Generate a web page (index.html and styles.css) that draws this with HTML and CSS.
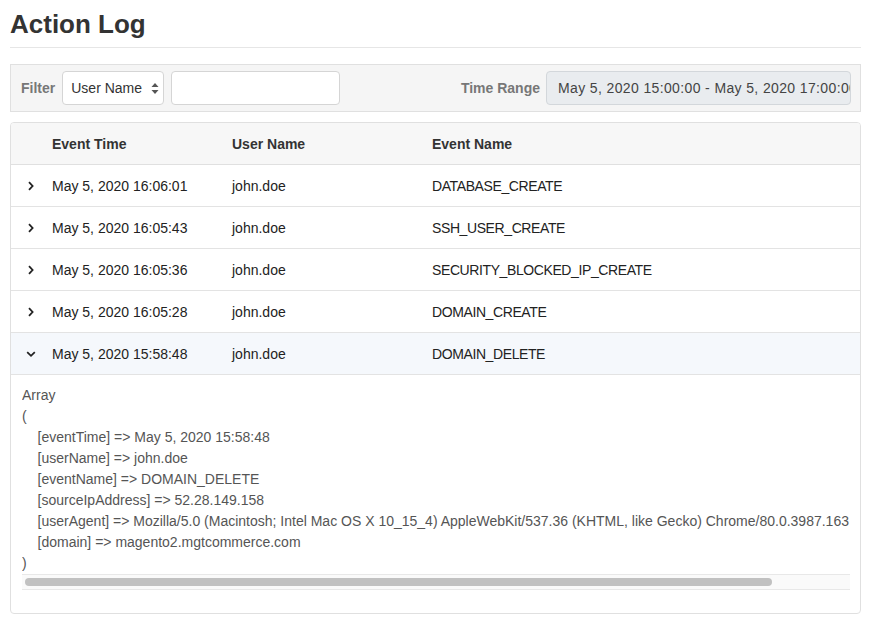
FILE: index.html
```html
<!DOCTYPE html>
<html>
<head>
<meta charset="utf-8">
<title>Action Log</title>
<link rel="stylesheet" href="styles.css">
</head>
<body>
<div class="page">
  <h1 class="title">Action Log</h1>
  <div class="filter-bar">
    <div class="filter-left">
      <span class="label">Filter</span>
      <div class="select">
        <span>User Name</span>
        <svg class="updown" width="8" height="13" viewBox="0 0 8 13"><path d="M4 1 L7.5 5 H0.5 Z M4 12 L7.5 8 H0.5 Z" fill="#555"/></svg>
      </div>
      <div class="text-input"></div>
    </div>
    <div class="filter-right">
      <span class="label">Time Range</span>
      <div class="range-input">May 5, 2020 15:00:00 - May 5, 2020 17:00:00</div>
    </div>
  </div>

  <div class="card">
    <div class="row head">
      <div></div>
      <div>Event Time</div>
      <div>User Name</div>
      <div>Event Name</div>
    </div>
    <div class="row">
      <div class="chev"><svg width="10" height="10" viewBox="0 0 10 10"><path d="M3 1.2 L6.6 5 L3 8.8" fill="none" stroke="#222" stroke-width="1.8"/></svg></div>
      <div>May 5, 2020 16:06:01</div>
      <div>john.doe</div>
      <div class="ev">DATABASE_CREATE</div>
    </div>
    <div class="row">
      <div class="chev"><svg width="10" height="10" viewBox="0 0 10 10"><path d="M3 1.2 L6.6 5 L3 8.8" fill="none" stroke="#222" stroke-width="1.8"/></svg></div>
      <div>May 5, 2020 16:05:43</div>
      <div>john.doe</div>
      <div class="ev">SSH_USER_CREATE</div>
    </div>
    <div class="row">
      <div class="chev"><svg width="10" height="10" viewBox="0 0 10 10"><path d="M3 1.2 L6.6 5 L3 8.8" fill="none" stroke="#222" stroke-width="1.8"/></svg></div>
      <div>May 5, 2020 16:05:36</div>
      <div>john.doe</div>
      <div class="ev">SECURITY_BLOCKED_IP_CREATE</div>
    </div>
    <div class="row">
      <div class="chev"><svg width="10" height="10" viewBox="0 0 10 10"><path d="M3 1.2 L6.6 5 L3 8.8" fill="none" stroke="#222" stroke-width="1.8"/></svg></div>
      <div>May 5, 2020 16:05:28</div>
      <div>john.doe</div>
      <div class="ev">DOMAIN_CREATE</div>
    </div>
    <div class="row open">
      <div class="chev"><svg width="10" height="10" viewBox="0 0 10 10"><path d="M1.2 3.2 L5 6.8 L8.8 3.2" fill="none" stroke="#222" stroke-width="1.8"/></svg></div>
      <div>May 5, 2020 15:58:48</div>
      <div>john.doe</div>
      <div class="ev">DOMAIN_DELETE</div>
    </div>
    <div class="detail">
      <div class="dump-wrap">
<pre class="dump">Array
(
    [eventTime] =&gt; May 5, 2020 15:58:48
    [userName] =&gt; john.doe
    [eventName] =&gt; DOMAIN_DELETE
    [sourceIpAddress] =&gt; 52.28.149.158
    [userAgent] =&gt; Mozilla/5.0 (Macintosh; Intel Mac OS X 10_15_4) AppleWebKit/537.36 (KHTML, like Gecko) Chrome/80.0.3987.163 Safari/537.36
    [domain] =&gt; magento2.mgtcommerce.com
)</pre>
      </div>
      <div class="hscroll"><div class="hthumb"></div></div>
    </div>
  </div>
</div>
</body>
</html>
```

FILE: styles.css
```css
* { box-sizing: border-box; }
html, body { margin: 0; padding: 0; background: #fff; }
body {
  font-family: "Liberation Sans", Arial, Helvetica, sans-serif;
  font-size: 14px;
  color: #333;
}
.page { padding: 0 10px; }
.title {
  margin: 0;
  padding-top: 8px;
  font-size: 26px;
  line-height: 32px;
  font-weight: bold;
  color: #333;
  padding-bottom: 7px;
  border-bottom: 1px solid #e6e6e6;
}
.filter-bar {
  margin-top: 16px;
  height: 48px;
  background: #f5f5f5;
  border: 1px solid #e0e0e0;
  display: flex;
  align-items: center;
  justify-content: space-between;
  padding: 0 9px 0 10px;
}
.filter-left, .filter-right { display: flex; align-items: center; }
.label {
  font-weight: bold;
  color: #777;
  font-size: 14px;
}
.filter-left .label { margin-right: 7px; }
.filter-right .label { margin-right: 6px; }
.select {
  width: 102px;
  height: 34px;
  background: #fff;
  border: 1px solid #d5d5d5;
  border-radius: 4px;
  display: flex;
  align-items: center;
  justify-content: space-between;
  padding: 0 4px 0 8px;
  color: #333;
}
.updown { margin-top: 1px; }
.text-input {
  margin-left: 7px;
  width: 169px;
  height: 34px;
  background: #fff;
  border: 1px solid #d5d5d5;
  border-radius: 4px;
}
.range-input {
  width: 305px;
  height: 34px;
  background: #e9ecef;
  border: 1px solid #d3d7db;
  border-radius: 4px;
  padding-left: 11px;
  line-height: 32px;
  white-space: nowrap;
  overflow: hidden;
  color: #444;
  letter-spacing: 0.37px;
}
.card {
  margin-top: 10px;
  border: 1px solid #e0e0e0;
  border-radius: 4px;
  overflow: hidden;
}
.row {
  display: grid;
  grid-template-columns: 41px 180px 200px 1fr;
  height: 42px;
  align-items: center;
  border-bottom: 1px solid #e3e3e3;
  color: #222;
}
.row.head {
  background: #f7f7f7;
  font-weight: bold;
  color: #333;
  border-bottom: 1px solid #e0e0e0;
  padding-top: 1px;
}
.row.open { background: #f5f8fc; }
.ev { letter-spacing: -0.4px; }
.chev {
  display: flex;
  align-items: center;
  justify-content: flex-end;
  padding-right: 16px;
}
.detail {
  padding: 10px 10px 23px 11px;
}
.dump-wrap { overflow: hidden; }
.dump {
  margin: 0;
  font-family: "Liberation Sans", Arial, Helvetica, sans-serif;
  font-size: 14px;
  line-height: 21px;
  color: #555;
  white-space: pre;
}
.hscroll {
  height: 16px;
  background: #fafafa;
  border-top: 1px solid #e8e8e8;
  border-bottom: 1px solid #e8e8e8;
  padding: 3px 0 0 3px;
}
.hthumb {
  width: 747px;
  height: 8px;
  border-radius: 4px;
  background: #c1c1c1;
}
```
